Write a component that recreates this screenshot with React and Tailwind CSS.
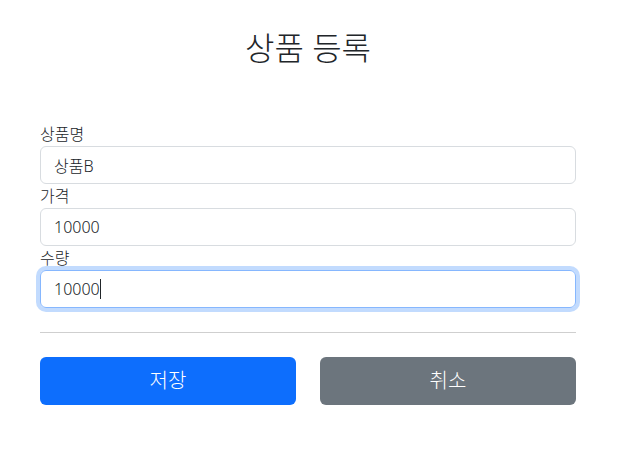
export default function App() {
  const font = { fontFamily: '"Noto Sans", "Noto Sans CJK KR", sans-serif' }
  return (
    <div className="min-h-screen bg-white text-[#212529] font-light" style={font}>
      <div className="ml-[40px] w-[536px] pt-[28px]">
        <h2 className="text-center text-[32px] leading-[40px] font-light">상품 등록</h2>

        <form className="mt-[54px]">
          <label className="block text-[16px] leading-[24px]">상품명</label>
          <input
            readOnly
            value="상품B"
            className="block w-full h-[38px] px-[13px] border border-[#d8dce0] rounded-[6px] text-[16px] font-light outline-none"
          />
          <label className="block text-[16px] leading-[24px]">가격</label>
          <input
            readOnly
            value="10000"
            className="block w-full h-[38px] px-[13px] border border-[#d8dce0] rounded-[6px] text-[16px] font-light outline-none"
          />
          <label className="block text-[16px] leading-[24px]">수량</label>
          <div className="flex items-center w-full h-[38px] px-[13px] border border-[#86b7fe] rounded-[6px] text-[16px] shadow-[0_0_0_4px_rgba(13,110,253,0.25)]">
            <span>10000</span>
            <span className="inline-block w-px h-[20px] bg-[#212529]" />
          </div>

          <hr className="my-[24px] border-0 border-t border-[#cfcfcf]" />

          <div className="grid grid-cols-2 gap-[24px]">
            <button type="button" className="h-[48px] rounded-[6px] bg-[#0d6efd] text-white text-[20px] font-light">
              저장
            </button>
            <button type="button" className="h-[48px] rounded-[6px] bg-[#6c757d] text-white text-[20px] font-light">
              취소
            </button>
          </div>
        </form>
      </div>
    </div>
  )
}
